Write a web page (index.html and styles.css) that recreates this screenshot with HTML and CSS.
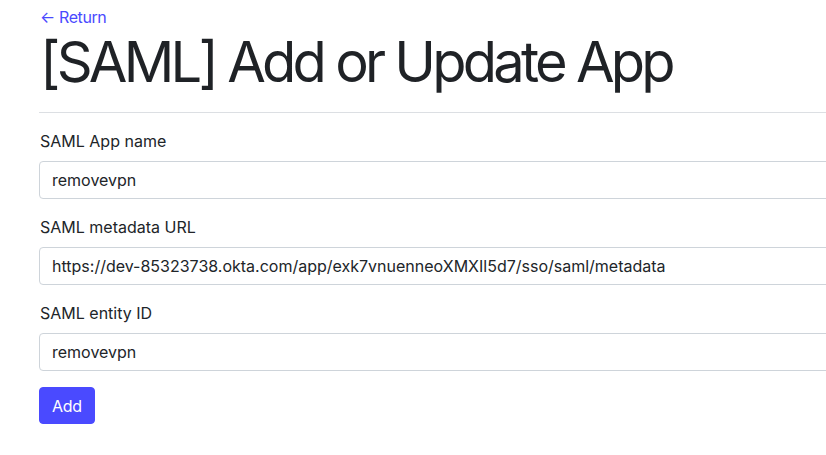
FILE: index.html
```html
<!DOCTYPE html>
<html lang="en">
<head>
<meta charset="utf-8">
<title>[SAML] Add or Update App</title>
<link rel="stylesheet" href="styles.css">
</head>
<body>
<main class="page">
  <a class="back" href="#">← Return</a>
  <h1 class="title">[SAML] Add or Update App</h1>
  <hr class="rule">
  <form class="form">
    <div class="field">
      <label class="label" for="name">SAML App name</label>
      <input class="input" id="name" type="text" value="removevpn">
    </div>
    <div class="field">
      <label class="label" for="meta">SAML metadata URL</label>
      <input class="input" id="meta" type="text" value="https://dev-85323738.okta.com/app/exk7vnuenneoXMXIl5d7/sso/saml/metadata">
    </div>
    <div class="field">
      <label class="label" for="entity">SAML entity ID</label>
      <input class="input" id="entity" type="text" value="removevpn">
    </div>
    <div class="actions">
      <button class="btn" type="button">Add</button>
    </div>
  </form>
</main>
</body>
</html>
```
FILE: styles.css
```css
html, body {
  margin: 0;
  padding: 0;
  background: #fff;
  overflow: hidden;
}
body {
  font-family: Inter, "Noto Sans", sans-serif;
  font-size: 16px;
  line-height: 24px;
  color: #212529;
}
.page {
  width: 1000px;
  padding: 5px 0 0 39px;
  display: flex;
  flex-direction: column;
}
.back {
  color: #4a4aff;
  text-decoration: none;
  align-self: flex-start;
  padding-left: 1px;
  letter-spacing: -0.4px;
}
.title {
  margin: 0;
  font-size: 56px;
  line-height: 67px;
  font-weight: 400;
  padding-left: 1px;
  letter-spacing: -3.75px;
  color: #1f2226;
}
.rule {
  margin: 16px 0;
  border: 0;
  border-top: 1px solid #dcdfe3;
  height: 0;
}
.form {
  display: flex;
  flex-direction: column;
  gap: 16px;
}
.field {
  display: flex;
  flex-direction: column;
  gap: 8px;
}
.label {
  padding-left: 1px;
}
.input {
  font: inherit;
  color: #212529;
  height: 38px;
  box-sizing: border-box;
  padding: 6px 12px;
  border: 1px solid #ced4da;
  border-radius: 4px;
  background: #fff;
  outline: none;
}
.btn {
  align-self: flex-start;
  font: inherit;
  color: #fff;
  background: #4a4aff;
  border: 1px solid #4a4aff;
  border-radius: 4px;
  padding: 6px 12px;
  height: 37px;
  letter-spacing: -0.3px;
}
.actions {
  display: flex;
}
```
